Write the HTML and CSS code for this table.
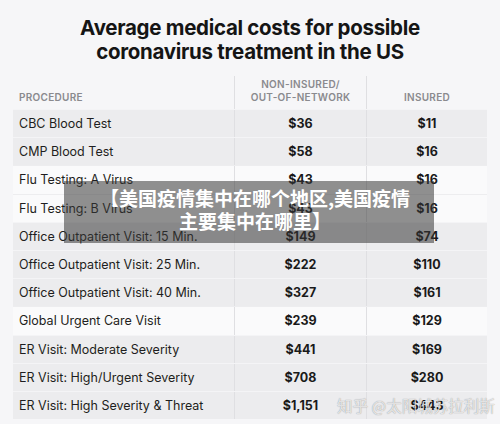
FILE: index.html
```html
<!DOCTYPE html>
<html>
<head>
<meta charset="utf-8">
<link rel="stylesheet" href="styles.css">
</head>
<body>
<div class="page">
  <h1 class="title">Average medical costs for possible<br>coronavirus treatment in the US</h1>
  <div class="table">
    <div class="row head">
      <div class="c1">PROCEDURE</div>
      <div class="c2">NON-INSURED/<br>OUT-OF-NETWORK</div>
      <div class="c3">INSURED</div>
    </div>
    <div class="row gray"><div class="c1">CBC Blood Test</div><div class="c2">$36</div><div class="c3">$11</div></div>
    <div class="row gray"><div class="c1">CMP Blood Test</div><div class="c2">$58</div><div class="c3">$16</div></div>
    <div class="row light"><div class="c1">Flu Testing: A Virus</div><div class="c2">$43</div><div class="c3">$16</div></div>
    <div class="row light"><div class="c1">Flu Testing: B Virus</div><div class="c2">$43</div><div class="c3">$16</div></div>
    <div class="row gray"><div class="c1">Office Outpatient Visit: 15 Min.</div><div class="c2">$149</div><div class="c3">$74</div></div>
    <div class="row gray"><div class="c1">Office Outpatient Visit: 25 Min.</div><div class="c2">$222</div><div class="c3">$110</div></div>
    <div class="row gray"><div class="c1">Office Outpatient Visit: 40 Min.</div><div class="c2">$327</div><div class="c3">$161</div></div>
    <div class="row light"><div class="c1">Global Urgent Care Visit</div><div class="c2">$239</div><div class="c3">$129</div></div>
    <div class="row gray"><div class="c1">ER Visit: Moderate Severity</div><div class="c2">$441</div><div class="c3">$169</div></div>
    <div class="row gray"><div class="c1">ER Visit: High/Urgent Severity</div><div class="c2">$708</div><div class="c3">$280</div></div>
    <div class="row gray"><div class="c1">ER Visit: High Severity &amp; Threat</div><div class="c2">$1,151</div><div class="c3">$443</div></div>
  </div>
  <div class="caption">【美国疫情集中在哪个地区,美国疫情<br>主要集中在哪里】</div>
  <div class="watermark">知乎 @太阳城苏拉利斯</div>
</div>
</body>
</html>
```
FILE: styles.css
```css
html, body {
  margin: 0;
  padding: 0;
  background: #f6f6f8;
}
.page {
  position: relative;
  width: 500px;
  height: 424px;
  overflow: hidden;
  font-family: Inter, "Liberation Sans", sans-serif;
  color: #1c1c1e;
}
.title {
  margin: 0;
  padding-top: 16px;
  height: 60px;
  box-sizing: border-box;
  text-align: center;
  font-size: 20.5px;
  line-height: 23.5px;
  font-weight: 700;
  letter-spacing: -0.3px;
  color: #151515;
}
.table {
  margin: 16px 13px 0 13px;
  width: 474px;
}
.row {
  display: grid;
  grid-template-columns: 221px 132px 121px;
  height: 28.2px;
  align-items: stretch;
}
.row > div {
  display: flex;
  align-items: center;
}
.row .c1 {
  padding-left: 6px;
  font-size: 12.5px;
  color: #1e1e20;
}
.row .c2, .row .c3 {
  justify-content: center;
  font-weight: 700;
  font-size: 12.5px;
  border-left: 1px solid #dfdfe2;
  color: #1a1a1a;
}
.row.gray { background: #ececee; border-top: 1px solid #f4f4f6; box-sizing: border-box; }
.row.light { background: #fafafb; border-top: 1px solid #ededef; box-sizing: border-box; }
.row.head {
  height: 33px;
  background: transparent;
}
.row.head > div {
  font-size: 10px;
  font-weight: 600;
  color: #8a8a8e;
  letter-spacing: 0.3px;
  text-align: center;
  line-height: 13px;
  align-items: flex-end;
  padding-bottom: 5px;
}
.row.head .c1 { padding-left: 6px; }
.caption {
  position: absolute;
  left: 64px;
  top: 181px;
  width: 370px;
  height: 62px;
  box-sizing: border-box;
  padding: 5px 0 0 12px;
  background: rgba(55, 55, 55, 0.55);
  color: #ffffff;
  text-align: center;
  font-family: "Noto Sans CJK SC", sans-serif;
  font-weight: 700;
  font-size: 19px;
  line-height: 23px;
}
.watermark {
  position: absolute;
  left: 337px;
  top: 394px;
  font-family: "Noto Sans CJK SC", sans-serif;
  font-size: 15.5px;
  line-height: 22px;
  color: rgba(250, 250, 250, 0.8);
  text-shadow: 0 0 1px rgba(0,0,0,0.45);
  white-space: nowrap;
}
```
